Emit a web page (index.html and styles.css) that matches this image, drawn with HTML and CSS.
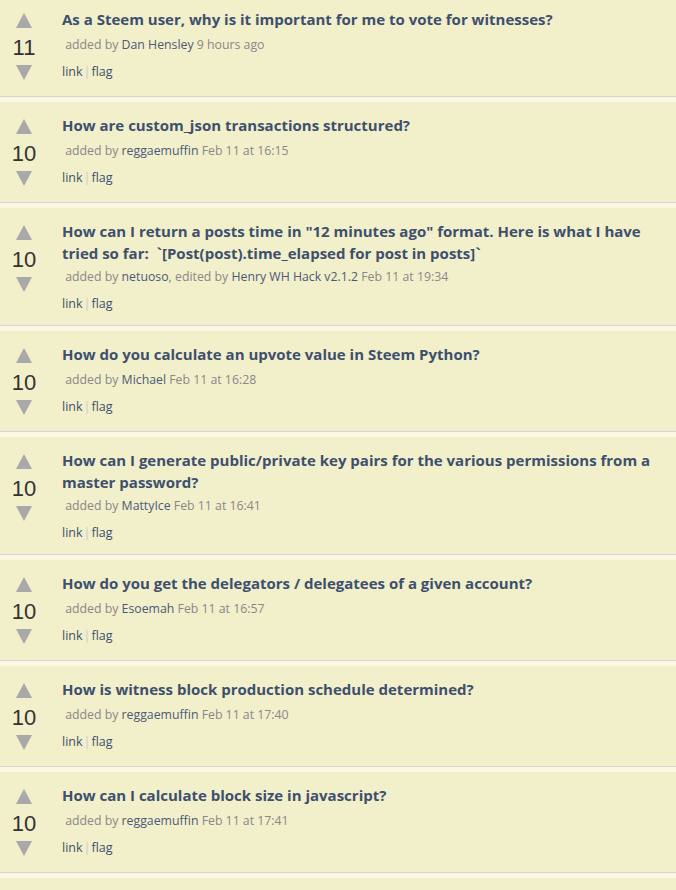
FILE: index.html
```html
<!DOCTYPE HTML>
<html>
<head>
  <meta charset="utf-8">
  <title>Questions</title>
  <link rel="stylesheet" href="styles.css">
</head>
<body>
<div class="list">

  <div class="item">
    <div class="vote"><a class="up" href="#"></a><span class="count">11</span><a class="down" href="#"></a></div>
    <div class="body">
      <h3 class="title"><a href="#">As a Steem user, why is it important for me to vote for witnesses?</a></h3>
      <div class="meta">&nbsp;added by <a href="#">Dan Hensley</a> 9 hours ago</div>
      <div class="links"><a href="#">link</a><span class="sep">|</span><a href="#">flag</a></div>
    </div>
  </div>

  <div class="item">
    <div class="vote"><a class="up" href="#"></a><span class="count">10</span><a class="down" href="#"></a></div>
    <div class="body">
      <h3 class="title"><a href="#">How are custom_json transactions structured?</a></h3>
      <div class="meta">&nbsp;added by <a href="#">reggaemuffin</a> Feb 11 at 16:15</div>
      <div class="links"><a href="#">link</a><span class="sep">|</span><a href="#">flag</a></div>
    </div>
  </div>

  <div class="item">
    <div class="vote"><a class="up" href="#"></a><span class="count">10</span><a class="down" href="#"></a></div>
    <div class="body">
      <h3 class="title"><a href="#">How can I return a posts time in "12 minutes ago" format. Here is what I have tried so far: &nbsp;`[Post(post).time_elapsed for post in posts]`</a></h3>
      <div class="meta">&nbsp;added by <a href="#">netuoso</a>, edited by <a href="#">Henry WH Hack v2.1.2</a> Feb 11 at 19:34</div>
      <div class="links"><a href="#">link</a><span class="sep">|</span><a href="#">flag</a></div>
    </div>
  </div>

  <div class="item">
    <div class="vote"><a class="up" href="#"></a><span class="count">10</span><a class="down" href="#"></a></div>
    <div class="body">
      <h3 class="title"><a href="#">How do you calculate an upvote value in Steem Python?</a></h3>
      <div class="meta">&nbsp;added by <a href="#">Michael</a> Feb 11 at 16:28</div>
      <div class="links"><a href="#">link</a><span class="sep">|</span><a href="#">flag</a></div>
    </div>
  </div>

  <div class="item">
    <div class="vote"><a class="up" href="#"></a><span class="count">10</span><a class="down" href="#"></a></div>
    <div class="body">
      <h3 class="title"><a href="#">How can I generate public/private key pairs for the various permissions from a master password?</a></h3>
      <div class="meta">&nbsp;added by <a href="#">MattyIce</a> Feb 11 at 16:41</div>
      <div class="links"><a href="#">link</a><span class="sep">|</span><a href="#">flag</a></div>
    </div>
  </div>

  <div class="item">
    <div class="vote"><a class="up" href="#"></a><span class="count">10</span><a class="down" href="#"></a></div>
    <div class="body">
      <h3 class="title"><a href="#">How do you get the delegators / delegatees of a given account?</a></h3>
      <div class="meta">&nbsp;added by <a href="#">Esoemah</a> Feb 11 at 16:57</div>
      <div class="links"><a href="#">link</a><span class="sep">|</span><a href="#">flag</a></div>
    </div>
  </div>

  <div class="item">
    <div class="vote"><a class="up" href="#"></a><span class="count">10</span><a class="down" href="#"></a></div>
    <div class="body">
      <h3 class="title"><a href="#">How is witness block production schedule determined?</a></h3>
      <div class="meta">&nbsp;added by <a href="#">reggaemuffin</a> Feb 11 at 17:40</div>
      <div class="links"><a href="#">link</a><span class="sep">|</span><a href="#">flag</a></div>
    </div>
  </div>

  <div class="item">
    <div class="vote"><a class="up" href="#"></a><span class="count">10</span><a class="down" href="#"></a></div>
    <div class="body">
      <h3 class="title"><a href="#">How can I calculate block size in javascript?</a></h3>
      <div class="meta">&nbsp;added by <a href="#">reggaemuffin</a> Feb 11 at 17:41</div>
      <div class="links"><a href="#">link</a><span class="sep">|</span><a href="#">flag</a></div>
    </div>
  </div>

  <div class="item">
    <div class="vote"><a class="up" href="#"></a><span class="count">9</span><a class="down" href="#"></a></div>
    <div class="body">
      <h3 class="title"><a href="#">What is the difference between a post and a comment?</a></h3>
      <div class="meta">&nbsp;added by <a href="#">reggaemuffin</a> Feb 11 at 17:52</div>
      <div class="links"><a href="#">link</a><span class="sep">|</span><a href="#">flag</a></div>
    </div>
  </div>

</div>
</body>
</html>
```

FILE: styles.css
```css
body{margin: 0;padding: 0;background-color: #fbf8e1;font-family: "Open Sans", "Noto Sans", arial, sans-serif;color: #333;}
a{text-decoration: none;color: #3e4f6e;}
.list{margin-top: -4px;}
.item{display: flex;min-height: 100px;background-color: #f2efcb;border-bottom: 1px solid #d3d5da;margin-bottom: 5px;}
.vote{width: 48px;flex: none;display: flex;flex-direction: column;align-items: center;padding-top: 17px;}
.vote .up, .vote .down{display: block;width: 0;height: 0;border-left: 8px solid transparent;border-right: 8px solid transparent;}
.vote .up{border-bottom: 15px solid #a9a9a9;}
.vote .down{border-top: 15px solid #a9a9a9;}
.count{font-family: arial, "Liberation Sans", sans-serif;font-size: 22px;line-height: 26px;margin: 7px 0 4px;color: #333;}
.body{flex: 1;padding: 12px 14px 11px 14px;}
.title{margin: 0;min-height: 24px;font-size: 15px;line-height: 22px;font-weight: 700;}
.title a{color: #3e4f6e;}
.meta{margin-top: 3px;font-size: 12.3px;line-height: 20px;color: #888;}
.meta a{color: #4c5a78;}
.links{margin-top: 7px;font-size: 12.5px;line-height: 20px;}
.links .sep{color: #ccc;margin: 0 1px;}
```
